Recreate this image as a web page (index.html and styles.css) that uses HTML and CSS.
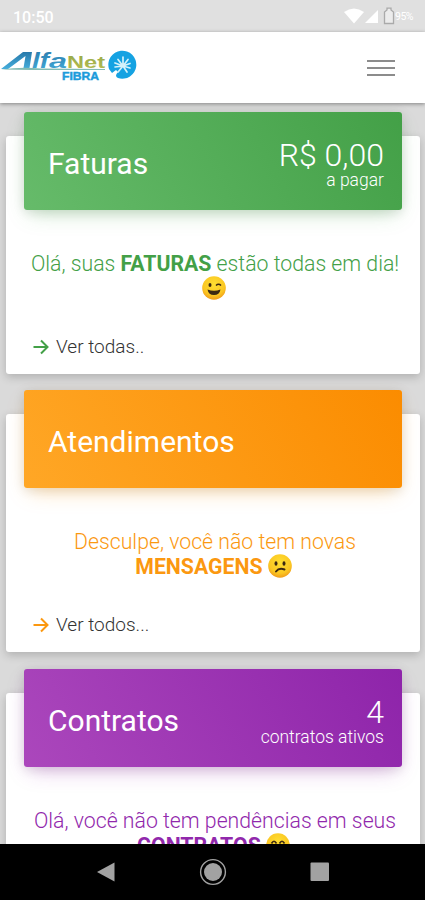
FILE: index.html
```html
<!DOCTYPE html>
<html lang="pt-BR">
<head>
<meta charset="utf-8">
<meta name="viewport" content="width=device-width, initial-scale=1">
<title>AlfaNet Fibra</title>
<link rel="stylesheet" href="styles.css">
</head>
<body>
<div class="screen">
  <div class="status">
    <span class="clock">10:50</span>
    <div class="status-icons">
      <svg class="wifi" width="20" height="16" viewBox="0 0 20 16"><path d="M0 4Q10-3 20 4L10 15.500Z" fill="#fff"/></svg>
      <svg class="signal" width="14" height="14" viewBox="0 0 14 14"><path d="M13 0V13H0Z" fill="#fff"/></svg>
      <svg class="battery" width="12" height="18" viewBox="0 0 12 18"><path d="M4 1.200H8V3L10.500 5V16.500H1.500V5L4 3Z" fill="#ececec" stroke="#aaa" stroke-width="1.300"/></svg>
      <span class="percent">95%</span>
    </div>
  </div>
  <header class="header">
    <svg class="logo" width="140" height="34" viewBox="0 0 140 34">
      <defs>
        <linearGradient id="blue" x1="0" y1="0" x2="0" y2="1"><stop offset="0" stop-color="#2879aa"/><stop offset="1" stop-color="#45addb"/></linearGradient>
        <linearGradient id="lime" x1="0" y1="0" x2="0" y2="1"><stop offset="0" stop-color="#97a94b"/><stop offset="1" stop-color="#b7bd50"/></linearGradient>
      </defs>
      <path d="M0 20L22 3H31L28.500 19H22.500L24.500 7L7 20Z" fill="url(#blue)"/>
      <path d="M0 20.500Q20 17.500 40 19.500L104 20V21L30 21Z" fill="#83bcb4"/>
      <text class="logo-word" x="31" y="19" font-size="22.500" textLength="17" lengthAdjust="spacingAndGlyphs" fill="url(#blue)">lf</text>
      <text class="logo-word" x="48" y="19" font-size="20" textLength="18" lengthAdjust="spacingAndGlyphs" fill="url(#blue)">a</text>
      <text class="logo-word net" x="66" y="19" font-size="16" textLength="38" lengthAdjust="spacingAndGlyphs" fill="url(#lime)">Net</text>
      <text class="logo-sub" x="61" y="31" font-size="10" textLength="37" lengthAdjust="spacingAndGlyphs">FIBRA</text>
      <path d="M108 20A14 14 0 1 1 117 29Q113 27 117 23L115 21L111 24Z" fill="#15a2e2"/>
      <path d="M117 23L122 17M122 17L114 14M122 17L117 10.500M122 17L122 8M122 17L127 10.500M122 17L129 14.500M122 17L129 19M122 17L126 23M122 17L114 18" stroke="#d5f2fa" stroke-width="1.700" stroke-linecap="round" fill="none"/>
    </svg>
    <div class="menu"><span></span><span></span><span></span></div>
  </header>
  <main class="content">
    <section class="card green">
      <div class="banner">
        <h2>Faturas</h2>
        <div class="figure"><span class="value">R$ 0,00</span><span class="label">a pagar</span></div>
      </div>
      <p class="message">Olá, suas <b>FATURAS</b> estão todas em dia!<br><svg class="emoji wink" viewBox="0 0 24 24"><use href="#face"/><path d="M5.500 13.500Q12 16 18.500 13.500Q17.500 19 12 19Q6.500 19 5.500 13.500" fill="#3c2812"/><ellipse cx="8" cy="9" rx="1.500" ry="2" fill="#3c2812"/><path d="M14 9.500Q16.500 7 19 9.500" stroke="#3c2812" stroke-width="1.500" fill="none"/></svg></p>
      <a class="more"><svg width="16" height="16" viewBox="0 0 16 16"><path d="M.500 8H14M8 1.500L14.500 8L8 14.500"/></svg>Ver todas..</a>
    </section>
    <section class="card orange">
      <div class="banner"><h2>Atendimentos</h2></div>
      <p class="message">Desculpe, você não tem novas<br><b>MENSAGENS</b> <svg class="emoji" viewBox="0 0 24 24"><use href="#face"/><ellipse cx="8" cy="9.500" rx="1.500" ry="2.200" fill="#3c2812"/><ellipse cx="16" cy="9.500" rx="1.500" ry="2.200" fill="#3c2812"/><path d="M8 17.500Q11 13.500 16.500 15.500" stroke="#3c2812" stroke-width="2" stroke-linecap="round" fill="none"/></svg></p>
      <a class="more"><svg width="16" height="16" viewBox="0 0 16 16"><path d="M.500 8H14M8 1.500L14.500 8L8 14.500"/></svg>Ver todos...</a>
    </section>
    <section class="card purple">
      <div class="banner">
        <h2>Contratos</h2>
        <div class="figure"><span class="value">4</span><span class="label">contratos ativos</span></div>
      </div>
      <p class="message">Olá, você não tem pendências em seus<br><b>CONTRATOS</b> <svg class="emoji" viewBox="0 0 24 24"><use href="#face"/><path d="M5.500 10.500Q8 6 10.500 10.500M13.500 10.500Q16 6 18.500 10.500M7 15Q12 19 17 15" stroke="#3c2812" stroke-width="1.700" fill="none"/></svg></p>
    </section>
  </main>
  <nav class="navbar">
    <svg width="18" height="20" viewBox="0 0 18 20"><path d="M0 10L17.500 .500V19.500Z" fill="#a2a2a2"/></svg>
    <svg width="28" height="28" viewBox="0 0 28 28"><circle cx="14" cy="14" r="12.400" fill="none" stroke="#a2a2a2" stroke-width="1.400"/><circle cx="14" cy="14" r="9" fill="#a2a2a2"/></svg>
    <svg width="20" height="20" viewBox="0 0 20 20"><rect x=".5" y=".5" width="18.500" height="18.500" rx="1" fill="#a2a2a2"/></svg>
  </nav>
</div>
<svg class="defs" width="0" height="0"><defs>
  <radialGradient id="skin" cx=".5" cy=".35" r=".7"><stop offset="0" stop-color="#ffdf32"/><stop offset=".65" stop-color="#fbc722"/><stop offset="1" stop-color="#ee9118"/></radialGradient>
  <circle id="face" cx="12" cy="12" r="11.800" fill="url(#skin)"/>
</defs></svg>
</body>
</html>
```
FILE: styles.css
```css
* { box-sizing: border-box; }
body { margin: 0; font-family: Roboto, "Liberation Sans", sans-serif; background: #dadada; overflow: hidden; }
.defs { position: absolute; }
.screen { width: 425px; height: 900px; display: flex; flex-direction: column; overflow: hidden; }
.status { flex: 0 0 32px; height: 32px; min-height: 0; background: #e0e0e0; display: flex; justify-content: space-between; align-items: flex-start; padding: 0 11px 0 13px; color: #fff; }
.clock { font-size: 16px; font-weight: 500; line-height: 22px; margin-top: 7px; }
.status-icons { display: flex; align-items: flex-start; }
.wifi { margin-top: 8px; }
.signal { margin: 10px 0 0 1px; }
.battery { margin: 7px 0 0 4px; }
.percent { font-size: 10.5px; line-height: 14px; margin-top: 10px; width: 19px; letter-spacing: -.5px; }
.header { flex: 0 0 71px; background: #fff; display: flex; justify-content: space-between; padding: 0 30px 0 1px; box-shadow: 0 1px 4px rgba(0,0,0,.4); z-index: 3; }
.logo { margin-top: 17px; }
.logo-word { font-family: "Liberation Sans", sans-serif; font-weight: 700; font-style: italic; }
.net { font-style: normal; }
.logo-sub { font-family: "Liberation Sans", sans-serif; font-weight: 700; fill: #1c9bdb; stroke: #1c9bdb; stroke-width: .4; }
.menu { width: 28px; display: flex; flex-direction: column; gap: 5.2px; margin-top: 27.5px; }
.menu span { height: 2px; background: #8c8c8c; }
.content { flex: 1 1 0; min-height: 0; overflow: hidden; padding: 33px 5px 0 6px; }
.card { height: 238px; margin-bottom: 40.3px; background: #fff; border-radius: 3px; box-shadow: 0 3px 10px rgba(0,0,0,.2); padding: 0 18px; }
.banner { height: 98px; transform: translateY(-24px); border-radius: 3px; padding: 0 18px 0 24px; display: flex; justify-content: space-between; color: #fff; }
.green .banner { background: linear-gradient(60deg, #66bb6a, #43a047); box-shadow: 0 8px 20px -6px rgba(76,175,80,.35), 0 2px 12px rgba(0,0,0,.12); }
.orange .banner { background: linear-gradient(60deg, #ffa726, #fb8c00); box-shadow: 0 8px 20px -6px rgba(255,152,0,.35), 0 2px 12px rgba(0,0,0,.12); }
.purple .banner { background: linear-gradient(60deg, #ab47bc, #8e24aa); box-shadow: 0 8px 20px -6px rgba(156,39,176,.35), 0 2px 12px rgba(0,0,0,.12); }
h2 { margin: 0; font-size: 30px; font-weight: 400; line-height: 104px; }
.figure { display: flex; flex-direction: column; align-items: flex-end; padding-top: 25px; font-weight: 300; }
.value { font-size: 32px; line-height: 36px; }
.label { font-size: 17.5px; line-height: 18px; margin-top: -2px; }
.message { margin: 17px -12px 0 -8px; height: 50px; text-align: center; font-size: 21.25px; line-height: 25px; font-weight: 300; white-space: nowrap; }
.message b { font-weight: 700; }
.green .message { color: #43a047; }
.orange .message { color: #fb9810; }
.purple .message { color: #9128ac; }
.emoji { width: 24px; height: 24px; vertical-align: -4px; margin-right: 3px; }
.more { display: flex; align-items: center; gap: 7px; margin: 33px 0 0 9px; font-size: 19px; font-weight: 300; line-height: 25px; color: #333; }
.more svg { fill: none; stroke: #43a047; stroke-width: 2; }
.orange .more svg { stroke: #fb9810; }
.navbar { flex: 0 0 56px; background: #000; display: flex; align-items: center; justify-content: space-between; padding: 0 95px 0 97px; z-index: 4; }
```
